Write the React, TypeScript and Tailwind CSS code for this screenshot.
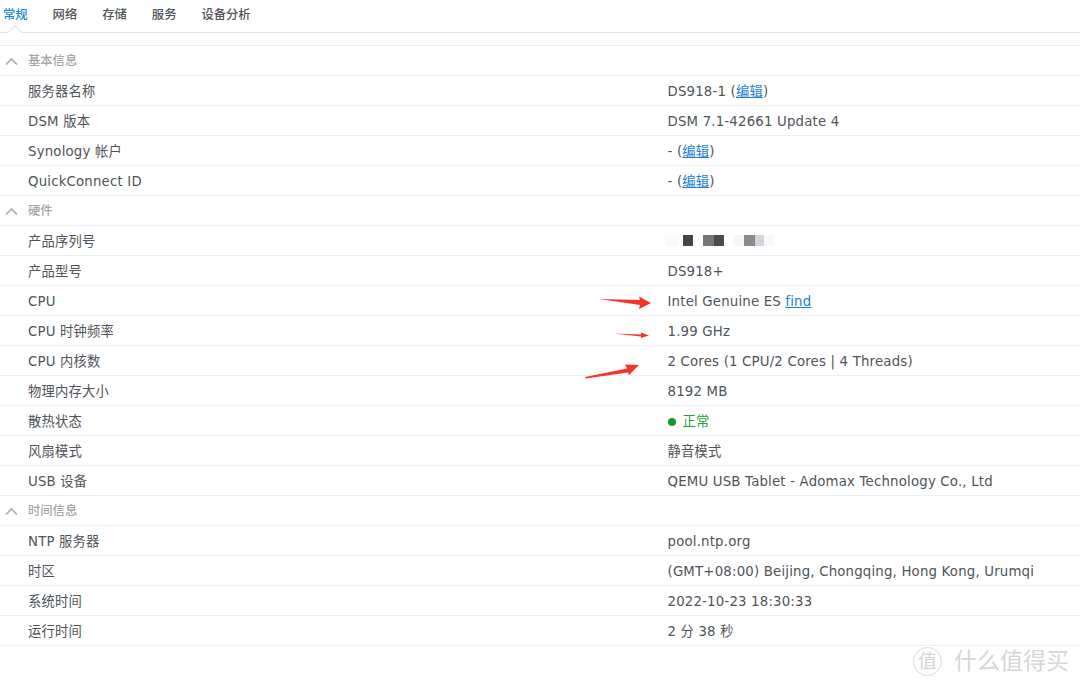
const tabs = ["常规", "网络", "存储", "服务", "设备分析"];

type Row = { label: string; value: React.ReactNode };

function Edit({ prefix }: { prefix: string }) {
  return (
    <span>
      {prefix} (<a className="text-[#1a7fdc] underline">编辑</a>)
    </span>
  );
}

const serialBlocks = [
  ["w-[14px]", "bg-[#fafafa]"],
  ["w-[4px]", "bg-white"],
  ["w-[10px]", "bg-[#45454f]"],
  ["w-[10px]", "bg-white"],
  ["w-[11px]", "bg-[#757877]"],
  ["w-[10px]", "bg-[#4a4c4e]"],
  ["w-[10px]", "bg-white"],
  ["w-[10px]", "bg-[#f6f6f6]"],
  ["w-[11px]", "bg-[#8b8b8f]"],
  ["w-[9px]", "bg-[#d4d4da]"],
  ["w-[10px]", "bg-[#f5f9f9]"],
];

function Serial() {
  return (
    <div className="flex h-[11px] -translate-x-[3px] -translate-y-[1px]">
      {serialBlocks.map(([w, bg], i) => (
        <span key={i} className={`h-full ${w} ${bg}`} />
      ))}
    </div>
  );
}

const sections: { title: string; rows: Row[] }[] = [
  {
    title: "基本信息",
    rows: [
      { label: "服务器名称", value: <Edit prefix="DS918-1" /> },
      { label: "DSM 版本", value: "DSM 7.1-42661 Update 4" },
      { label: "Synology 帐户", value: <Edit prefix="-" /> },
      { label: "QuickConnect ID", value: <Edit prefix="-" /> },
    ],
  },
  {
    title: "硬件",
    rows: [
      { label: "产品序列号", value: <Serial /> },
      { label: "产品型号", value: "DS918+" },
      {
        label: "CPU",
        value: (
          <span>
            Intel Genuine ES <a className="text-[#1a7fdc] underline">find</a>
          </span>
        ),
      },
      { label: "CPU 时钟频率", value: "1.99 GHz" },
      { label: "CPU 内核数", value: "2 Cores (1 CPU/2 Cores | 4 Threads)" },
      { label: "物理内存大小", value: "8192 MB" },
      {
        label: "散热状态",
        value: (
          <span className="flex items-center gap-[7px] text-[#1fa33a]">
            <span className="h-2 w-2 rounded-full bg-[#0f9d2c]" />
            正常
          </span>
        ),
      },
      { label: "风扇模式", value: "静音模式" },
      { label: "USB 设备", value: "QEMU USB Tablet - Adomax Technology Co., Ltd" },
    ],
  },
  {
    title: "时间信息",
    rows: [
      { label: "NTP 服务器", value: "pool.ntp.org" },
      { label: "时区", value: "(GMT+08:00) Beijing, Chongqing, Hong Kong, Urumqi" },
      { label: "系统时间", value: "2022-10-23 18:30:33" },
      { label: "运行时间", value: "2 分 38 秒" },
    ],
  },
];

function Chevron() {
  return (
    <svg width="14" height="8" viewBox="0 0 14 8" className="ml-[5px] mr-[9px]" fill="none">
      <path d="M1 7.5 L6.5 2 L12 7.5" stroke="#a9adb1" strokeWidth="1.7" />
    </svg>
  );
}

export default function App() {
  return (
    <div
      className="relative h-[685px] w-[1080px] overflow-hidden bg-white text-[13.3px] tracking-[0.19px] text-[#4f5459]"
      style={{ fontFamily: '"DejaVu Sans", "Noto Sans CJK SC", sans-serif' }}
    >
      <div className="relative flex h-[33px] gap-[25px] border-b border-[#dbe4ee] pl-[3px] pt-[6px] text-[12.3px] font-medium tracking-normal">
        {tabs.map((t, i) => (
          <span key={t} className={i === 0 ? "text-[#1a85e6]" : "text-[#50555a]"}>
            {t}
          </span>
        ))}
        <span className="absolute left-[10px] top-[27px] h-[10px] w-[10px] rotate-45 border-l border-t border-[#dbe4ee] bg-white" />
      </div>
      <div className="mt-[12px] border-t border-[#e6ecf2]">
        {sections.map((s) => (
          <div key={s.title}>
            <div className="flex h-[30px] items-center border-b border-[#edf1f5] text-[12.3px] font-medium tracking-normal text-[#a3a7aa]">
              <Chevron />
              <span className="pt-[2px]">{s.title}</span>
            </div>
            {s.rows.map((r) => (
              <div key={r.label} className="flex h-[30px] items-center border-b border-[#edf1f5] pt-[2px]">
                <div className="w-[667.5px] pl-[28px]">{r.label}</div>
                <div>{r.value}</div>
              </div>
            ))}
          </div>
        ))}
      </div>

      {/* arrows drawn on top of the shot */}
      <svg className="absolute left-0 top-0" width="1080" height="685" viewBox="0 0 1080 685">
        <path d="M599 299 L640 300 L639 296.5 L651 303 L639 309 L640 305 Z" fill="#f4362a" />
        <path d="M614 333.5 L641 334.5 L641 332.5 L649 335.5 L641 338 L641 336.5 Z" fill="#f4362a" />
        <path d="M585 377 L627 368.5 L625 364.5 L639 365 L629 375 L628 372.5 L586 378.5 Z" fill="#f4362a" />
      </svg>

      {/* site watermark */}
      <div className="absolute bottom-[9px] left-[913px] flex items-center gap-[12px] tracking-normal text-[#d6d6d6]">
        <span className="flex h-[29px] w-[29px] items-center justify-center rounded-full border border-[#dcdcdc] text-[19px] leading-none">
          值
        </span>
        <span className="text-[23px] leading-none">什么值得买</span>
      </div>
    </div>
  );
}
